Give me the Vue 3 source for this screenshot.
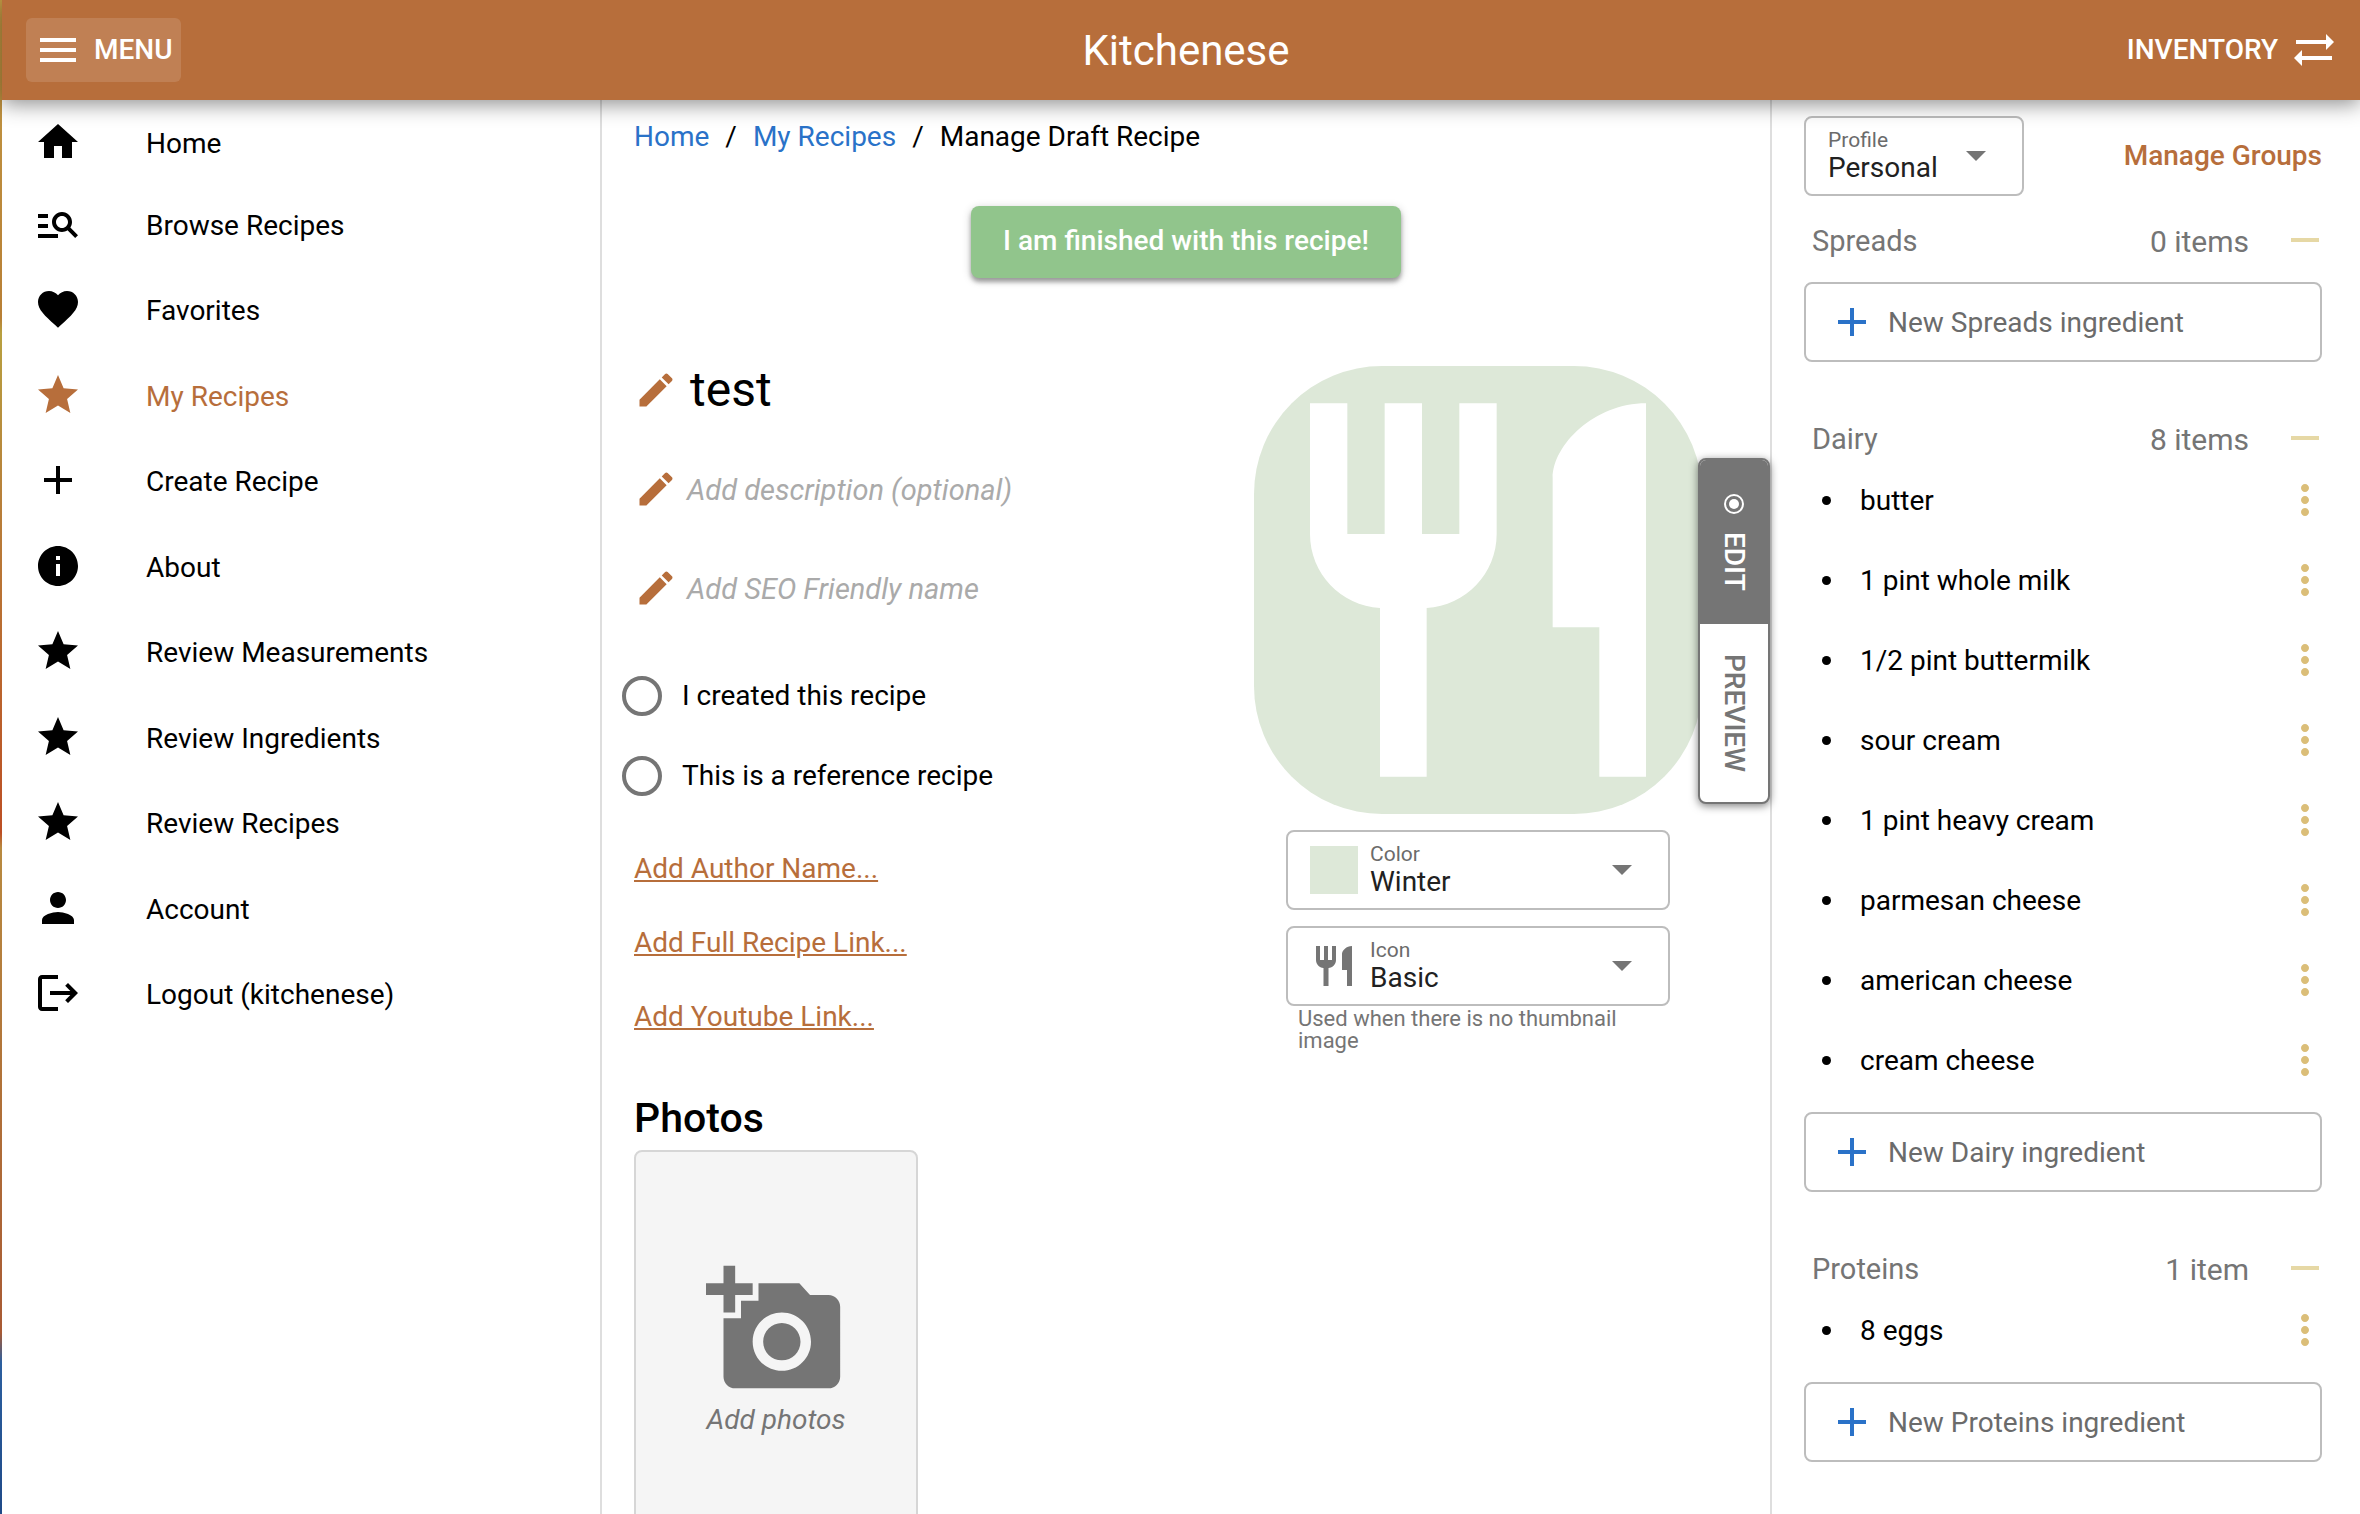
<script setup>
import { ref } from 'vue'

const icons = {
  home: 'M10 20v-6h4v6h5v-8h3L12 3 2 12h3v8z',
  browse: 'M7 9H2V7h5v2zm0 3H2v2h5v-2zm13.59 7-3.83-3.83c-.8.52-1.74.83-2.76.83-2.76 0-5-2.24-5-5s2.24-5 5-5 5 2.24 5 5c0 1.02-.31 1.96-.83 2.75L22 17.59 20.59 19zM17 11c0-1.65-1.35-3-3-3s-3 1.35-3 3 1.35 3 3 3 3-1.35 3-3zM2 19h10v-2H2v2z',
  heart: 'M12 21.35l-1.45-1.32C5.4 15.36 2 12.28 2 8.5 2 5.42 4.42 3 7.5 3c1.74 0 3.41.81 4.5 2.09C13.09 3.81 14.76 3 16.5 3 19.58 3 22 5.42 22 8.5c0 3.78-3.4 6.86-8.55 11.54L12 21.35z',
  star: 'M12 17.27L18.18 21l-1.64-7.03L22 9.24l-7.19-.61L12 2 9.19 8.63 2 9.24l5.46 4.73L5.82 21z',
  plus: 'M19 13h-6v6h-2v-6H5v-2h6V5h2v6h6v2z',
  minus: 'M19 13H5v-2h14v2z',
  info: 'M12 2C6.48 2 2 6.48 2 12s4.48 10 10 10 10-4.48 10-10S17.52 2 12 2zm1 15h-2v-6h2v6zm0-8h-2V7h2v2z',
  person: 'M12 12c2.21 0 4-1.79 4-4s-1.79-4-4-4-4 1.79-4 4 1.79 4 4 4zm0 2c-2.67 0-8 1.34-8 4v2h16v-2c0-2.66-5.33-4-8-4z',
  logout: 'M17 7l-1.41 1.41L18.17 11H8v2h10.17l-2.58 2.58L17 17l5-5zM4 5h8V3H4c-1.1 0-2 .9-2 2v14c0 1.1.9 2 2 2h8v-2H4V5z',
  menu: 'M3 18h18v-2H3v2zm0-5h18v-2H3v2zm0-7v2h18V6H3z',
  swap: 'M22 8l-4-4v3H3v2h15v3l4-4zM2 16l4 4v-3h15v-2H6v-3l-4 4z',
  edit: 'M3 17.25V21h3.75L17.81 9.94l-3.75-3.75L3 17.25zM20.71 7.04c.39-.39.39-1.02 0-1.41l-2.34-2.34c-.39-.39-1.02-.39-1.41 0l-1.83 1.83 3.75 3.75 1.83-1.83z',
  dots: 'M12 8c1.1 0 2-.9 2-2s-.9-2-2-2-2 .9-2 2 .9 2 2 2zm0 2c-1.1 0-2 .9-2 2s.9 2 2 2 2-.9 2-2-.9-2-2-2zm0 6c-1.1 0-2 .9-2 2s.9 2 2 2 2-.9 2-2-.9-2-2-2z',
  cutlery: 'M11 9H9V2H7v7H5V2H3v7c0 2.12 1.66 3.84 3.75 3.97V22h2.5v-9.03C11.34 12.84 13 11.12 13 9V2h-2v7zm5-3v8h2.5v8H21V2c-2.76 0-5 2.24-5 4z',
  camera: 'M3 4V1h2v3h3v2H5v3H3V6H0V4h3zm3 6V7h3V4h7l1.83 2H21c1.1 0 2 .9 2 2v12c0 1.1-.9 2-2 2H5c-1.1 0-2-.9-2-2V10h3zm7 9c2.76 0 5-2.24 5-5s-2.24-5-5-5-5 2.24-5 5 2.24 5 5 5zm-3.2-5c0 1.77 1.43 3.2 3.2 3.2s3.2-1.43 3.2-3.2-1.43-3.2-3.2-3.2-3.2 1.43-3.2 3.2z'
}

const nav = [
  { icon: 'home', label: 'Home' },
  { icon: 'browse', label: 'Browse Recipes' },
  { icon: 'heart', label: 'Favorites' },
  { icon: 'star', label: 'My Recipes', active: true },
  { icon: 'plus', label: 'Create Recipe' },
  { icon: 'info', label: 'About' },
  { icon: 'star', label: 'Review Measurements' },
  { icon: 'star', label: 'Review Ingredients' },
  { icon: 'star', label: 'Review Recipes' },
  { icon: 'person', label: 'Account' },
  { icon: 'logout', label: 'Logout (kitchenese)' }
]

const source = ref('')
const sources = [
  { value: 'mine', label: 'I created this recipe' },
  { value: 'reference', label: 'This is a reference recipe' }
]

const links = ['Add Author Name...', 'Add Full Recipe Link...', 'Add Youtube Link...']

const groups = [
  { name: 'Spreads', count: '0 items', items: [] },
  {
    name: 'Dairy',
    count: '8 items',
    items: [
      'butter',
      '1 pint whole milk',
      '1/2 pint buttermilk',
      'sour cream',
      '1 pint heavy cream',
      'parmesan cheese',
      'american cheese',
      'cream cheese'
    ]
  },
  { name: 'Proteins', count: '1 item', items: ['8 eggs'] }
]
</script>

<template>
  <div class="app">
    <header class="topbar">
      <div class="topbar-side">
        <button class="bar-btn bar-btn-on" type="button">
          <svg class="icon" viewBox="0 0 24 24"><path :d="icons.menu" /></svg>
          <span>MENU</span>
        </button>
      </div>
      <h1 class="brand">Kitchenese</h1>
      <div class="topbar-side topbar-end">
        <button class="bar-btn" type="button">
          <span>INVENTORY</span>
          <svg class="icon" viewBox="0 0 24 24"><path :d="icons.swap" /></svg>
        </button>
      </div>
    </header>

    <div class="columns">
      <nav class="sidebar">
        <ul>
          <li v-for="n in nav" :key="n.label">
            <a href="#" :class="{ active: n.active }">
              <svg class="icon" viewBox="0 0 24 24"><path :d="icons[n.icon]" /></svg>
              <span>{{ n.label }}</span>
            </a>
          </li>
        </ul>
      </nav>

      <main class="main">
        <nav class="crumbs">
          <a href="#">Home</a><span>/</span><a href="#">My Recipes</a><span>/</span><span>Manage Draft Recipe</span>
        </nav>

        <button class="finish" type="button">I am finished with this recipe!</button>

        <div class="recipe">
          <section class="details">
            <div class="field">
              <button type="button" aria-label="Edit title"><svg viewBox="0 0 24 24"><path :d="icons.edit" /></svg></button>
              <h2>test</h2>
            </div>
            <div class="field">
              <button type="button" aria-label="Edit description"><svg viewBox="0 0 24 24"><path :d="icons.edit" /></svg></button>
              <em>Add description (optional)</em>
            </div>
            <div class="field">
              <button type="button" aria-label="Edit SEO name"><svg viewBox="0 0 24 24"><path :d="icons.edit" /></svg></button>
              <em>Add SEO Friendly name</em>
            </div>

            <div class="radios">
              <label v-for="s in sources" :key="s.value">
                <input v-model="source" type="radio" name="source" :value="s.value" />
                <span>{{ s.label }}</span>
              </label>
            </div>

            <ul class="links">
              <li v-for="l in links" :key="l"><a href="#">{{ l }}</a></li>
            </ul>
          </section>

          <section class="appearance">
            <div class="thumb"><svg viewBox="0 0 24 24"><path :d="icons.cutlery" /></svg></div>
            <div class="select-box wide">
              <span class="swatch"></span>
              <div class="select-text">
                <label for="color">Color</label>
                <select id="color"><option>Winter</option></select>
              </div>
              <svg class="arrow" viewBox="0 0 20 10"><path d="M0 0h20L10 10z" /></svg>
            </div>
            <div class="select-box wide">
              <svg class="icon" viewBox="0 0 24 24"><path :d="icons.cutlery" /></svg>
              <div class="select-text">
                <label for="icon">Icon</label>
                <select id="icon"><option>Basic</option></select>
              </div>
              <svg class="arrow" viewBox="0 0 20 10"><path d="M0 0h20L10 10z" /></svg>
            </div>
            <p class="hint">Used when there is no thumbnail image</p>
          </section>
        </div>

        <h2 class="photos-title">Photos</h2>
        <button class="photos" type="button">
          <svg viewBox="0 0 24 24"><path :d="icons.camera" /></svg>
          <em>Add photos</em>
        </button>

        <div class="mode">
          <button class="mode-on" type="button">
            <svg viewBox="0 0 20 20"><circle cx="10" cy="10" r="9" fill="none" stroke="currentColor" stroke-width="2" /><circle cx="10" cy="10" r="5" /></svg>
            <span>EDIT</span>
          </button>
          <button type="button"><span>PREVIEW</span></button>
        </div>
      </main>

      <aside class="inventory">
        <div class="inventory-head">
          <div class="select-box profile">
            <div class="select-text">
              <label for="profile">Profile</label>
              <select id="profile"><option>Personal</option></select>
            </div>
            <svg class="arrow" viewBox="0 0 20 10"><path d="M0 0h20L10 10z" /></svg>
          </div>
          <a class="manage" href="#">Manage Groups</a>
        </div>

        <section v-for="g in groups" :key="g.name" class="group">
          <header>
            <h3>{{ g.name }}</h3>
            <span>{{ g.count }}</span>
            <button type="button" :aria-label="'Collapse ' + g.name"><svg class="icon" viewBox="0 0 24 24"><path :d="icons.minus" /></svg></button>
          </header>
          <ul>
            <li v-for="i in g.items" :key="i">
              <span>{{ i }}</span>
              <button type="button" :aria-label="'Options for ' + i"><svg class="icon" viewBox="0 0 24 24"><path :d="icons.dots" /></svg></button>
            </li>
          </ul>
          <div class="new-item">
            <svg class="icon" viewBox="0 0 24 24"><path :d="icons.plus" /></svg>
            <input type="text" :placeholder="'New ' + g.name + ' ingredient'" :aria-label="'New ' + g.name + ' ingredient'" />
          </div>
        </section>
      </aside>
    </div>
  </div>
</template>

<style>
body {
  overflow: hidden;
}
</style>

<style scoped>
.app {
  --accent: #b76e3b;
  --grey: #757575;
  --line: #dedede;
  --outline: #bdbdbd;
  --winter: #dde8d8;
  position: relative;
  display: flex;
  flex-direction: column;
  box-sizing: border-box;
  height: 100vh;
  padding-left: 2px;
  overflow: hidden;
  background: linear-gradient(#c29a45, #b87f35 21%, #b8a040 22%, #b8803a 33%, #bc4f24 55%, #b88a40 56%, #b07038 73%, #a85a34 88%, #2c5f9f 90%, #1f4a88);
  font-family: Roboto, sans-serif;
  font-size: 28px;
  line-height: 32px;
  color: #000;
}
* {
  box-sizing: border-box;
}
button,
select,
input {
  font: inherit;
  color: inherit;
  margin: 0;
  padding: 0;
  border: 0;
  background: none;
}
button {
  cursor: pointer;
}
svg {
  display: block;
  flex: none;
  fill: currentColor;
}
ul {
  margin: 0;
  padding: 0;
  list-style: none;
}
h1, h2, h3, p {
  margin: 0;
  font-weight: 400;
}
a {
  color: inherit;
  text-decoration: none;
}
.icon {
  width: 48px;
  height: 48px;
}

.topbar {
  position: relative;
  z-index: 2;
  display: flex;
  align-items: center;
  flex: none;
  height: 100px;
  padding: 0 14px 0 24px;
  background: var(--accent);
  color: #fff;
  box-shadow: 0 4px 20px rgba(0, 0, 0, 0.45);
}
.topbar-side {
  display: flex;
  flex: 1;
}
.topbar-end {
  justify-content: flex-end;
}
.bar-btn {
  display: flex;
  align-items: center;
  gap: 12px;
  height: 64px;
  padding: 0 8px;
  border-radius: 6px;
  font-weight: 500;
}
.bar-btn-on {
  background: rgba(255, 255, 255, 0.13);
}
.brand {
  padding-top: 2px;
  font-size: 42px;
  line-height: 48px;
}

.columns {
  display: flex;
  flex: 1;
  min-height: 0;
  background: #fff;
}
.sidebar {
  flex: none;
  width: 600px;
  padding-top: 2px;
  border-right: 2px solid var(--line);
}
.sidebar li {
  display: flex;
  height: 86px;
}
.sidebar li:nth-child(even) {
  height: 85px;
}
.sidebar li:first-child {
  height: 79px;
}
.sidebar a {
  display: flex;
  align-items: center;
  flex: 1;
  gap: 64px;
  padding-left: 32px;
}
.sidebar span {
  padding-top: 4px;
}
.sidebar .active {
  color: var(--accent);
}

.main {
  position: relative;
  display: flex;
  flex-direction: column;
  align-items: flex-start;
  flex: 1;
  min-width: 0;
  padding: 21px 32px 0;
}
.crumbs {
  display: flex;
  gap: 16px;
}
.crumbs a {
  color: #2a72c8;
}
.finish {
  align-self: center;
  flex: none;
  height: 72px;
  margin-top: 53px;
  padding: 0 32px 2px;
  border-radius: 8px;
  background: #91c58c;
  color: #fff;
  font-weight: 500;
  box-shadow: 0 4px 4px rgba(0, 0, 0, 0.3), 0 2px 10px rgba(0, 0, 0, 0.2);
}
.recipe {
  display: flex;
  flex: none;
  justify-content: space-between;
  width: 100%;
  margin-top: 54px;
}
.details {
  flex: 1;
  padding-top: 8px;
}
.field {
  display: flex;
  align-items: center;
  gap: 9px;
  height: 99px;
}
.field button {
  color: var(--accent);
}
.field svg {
  width: 44px;
  height: 44px;
}
.field h2 {
  padding-left: 3px;
  font-size: 48px;
  line-height: 56px;
}
.field em {
  padding-top: 2px;
  font-size: 29px;
  color: #aaa;
}
.radios {
  margin: 19px 0 0 -12px;
}
.radios label {
  display: flex;
  align-items: center;
  gap: 20px;
  height: 80px;
}
.radios input {
  appearance: none;
  width: 40px;
  height: 40px;
  border: 4px solid var(--grey);
  border-radius: 50%;
}
.links {
  margin-top: 16px;
  color: var(--accent);
}
.links li {
  display: flex;
  align-items: center;
  height: 74px;
}
.links a {
  text-decoration: underline;
}

.appearance {
  display: flex;
  flex-direction: column;
  align-items: center;
  width: 520px;
  padding-top: 34px;
}
.thumb {
  width: 448px;
  height: 448px;
  border-radius: 128px;
  background: var(--winter);
  color: #fff;
}
.select-box {
  display: flex;
  align-items: center;
  height: 80px;
  padding: 0 36px 0 22px;
  border: 2px solid var(--outline);
  border-radius: 8px;
}
.wide {
  width: 384px;
  gap: 12px;
  margin-top: 16px;
  color: var(--grey);
}
.select-text {
  display: flex;
  flex-direction: column;
  flex: 1;
  min-width: 0;
}
.select-text label {
  font-size: 21px;
  line-height: 24px;
  color: #6b6b6b;
}
.select-text select {
  appearance: none;
  width: 100%;
  line-height: 32px;
  color: #212121;
}
.arrow {
  width: 20px;
  height: 10px;
  color: var(--grey);
}
.swatch {
  width: 48px;
  height: 48px;
  background: var(--winter);
}
.hint {
  width: 360px;
  margin-top: 2px;
  font-size: 22px;
  line-height: 22px;
  color: var(--grey);
}

.photos-title {
  margin-top: 40px;
  font-size: 41px;
  line-height: 48px;
  font-weight: 500;
}
.photos {
  display: flex;
  flex-direction: column;
  align-items: center;
  justify-content: center;
  flex: none;
  gap: 4px;
  width: 284px;
  height: 396px;
  margin-top: 8px;
  border: 2px solid #d6d6d6;
  border-radius: 8px;
  background: #f5f5f5;
  color: var(--grey);
}
.photos svg {
  width: 140px;
  height: 140px;
}

.mode {
  position: absolute;
  top: 358px;
  right: 0;
  display: flex;
  flex-direction: column;
  width: 72px;
  border: 2px solid var(--grey);
  border-radius: 8px;
  overflow: hidden;
  background: #fff;
  color: var(--grey);
  box-shadow: 0 2px 8px rgba(0, 0, 0, 0.5);
}
.mode button {
  display: flex;
  align-items: center;
  justify-content: center;
  writing-mode: vertical-rl;
  gap: 18px;
  height: 178px;
  font-weight: 500;
}
.mode .mode-on {
  height: 164px;
  background: var(--grey);
  color: #fff;
}
.mode svg {
  width: 20px;
  height: 20px;
}

.inventory {
  flex: none;
  width: 590px;
  padding: 16px 38px 0 32px;
  border-left: 2px solid var(--line);
}
.inventory-head {
  display: flex;
  align-items: center;
  justify-content: space-between;
  margin-bottom: 22px;
}
.profile {
  width: 220px;
}
.manage {
  color: var(--accent);
  font-weight: 500;
}
.group {
  margin-bottom: 54px;
}
.group header {
  display: flex;
  align-items: center;
  height: 44px;
  padding-left: 8px;
  color: var(--grey);
}
.group h3 {
  flex: 1;
  padding-top: 2px;
  font-size: 29px;
}
.group header span {
  padding-top: 4px;
  font-size: 30px;
}
.group header button {
  margin: 0 -7px 0 32px;
  color: #e6d8a5;
}
.group ul {
  min-height: 8px;
  margin-bottom: 12px;
}
.group li {
  display: flex;
  align-items: center;
  justify-content: space-between;
  height: 80px;
  padding-left: 18px;
}
.group li::before {
  content: "";
  width: 9px;
  height: 9px;
  margin-right: 29px;
  border-radius: 50%;
  background: #000;
}
.group li span {
  flex: 1;
  padding-top: 2px;
}
.group li button {
  margin-right: -7px;
  color: #dbbe78;
}
.new-item {
  display: flex;
  align-items: center;
  gap: 12px;
  height: 80px;
  padding: 0 22px;
  border: 2px solid var(--outline);
  border-radius: 8px;
  color: #2a72c8;
}
.new-item input {
  flex: 1;
  min-width: 0;
  height: 48px;
  outline: 0;
  color: #212121;
}
.new-item input::placeholder {
  color: #6b6b6b;
  opacity: 1;
}
</style>
